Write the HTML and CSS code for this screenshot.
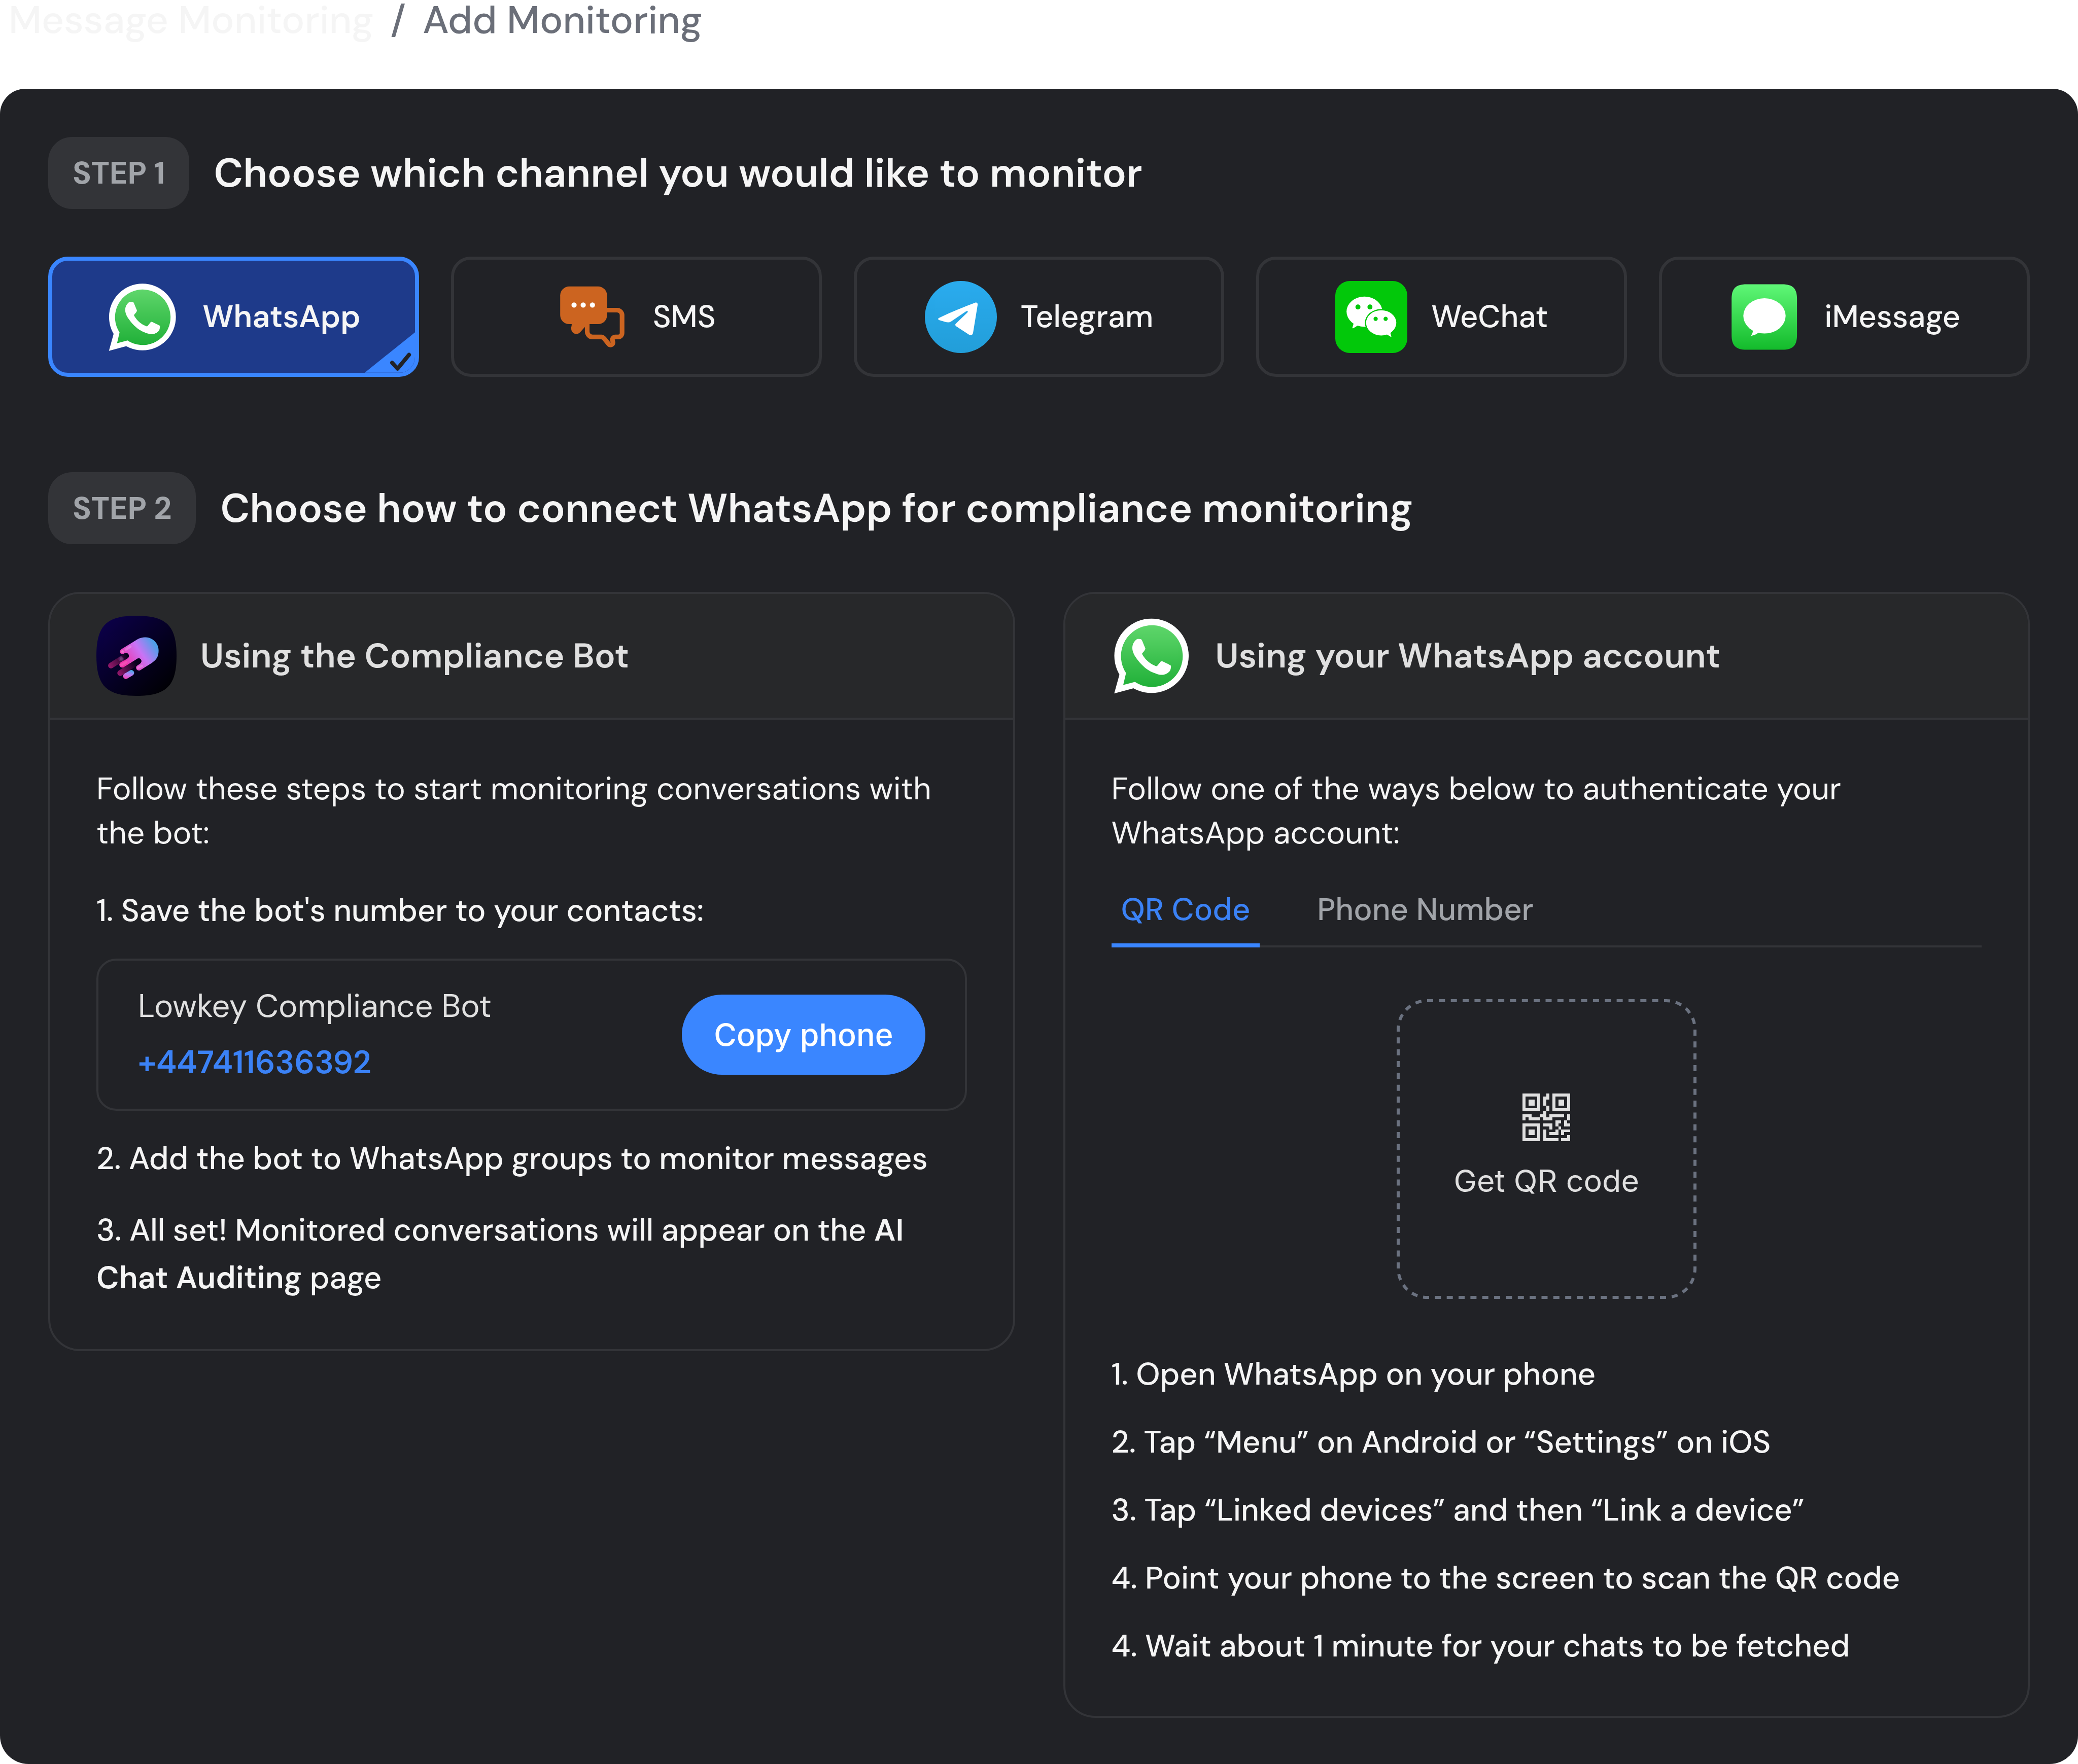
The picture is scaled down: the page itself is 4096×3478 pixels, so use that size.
FILE: index.html
```html
<!DOCTYPE html>
<html lang="en">
<head>
  <meta charset="UTF-8" />
  <title>Add Monitoring</title>
  <link rel="stylesheet" href="styles.css">
</head>
<body>

  <svg class="defs" aria-hidden="true">
    <defs>
      <linearGradient id="waGreen" x1="0" y1="0" x2="0" y2="1">
        <stop offset="0" stop-color="#5fd66b" />
        <stop offset="1" stop-color="#20b038" />
      </linearGradient>
      <symbol id="whatsapp" viewBox="0 0 144 144">
        <circle cx="71.8" cy="72" r="66.8" fill="#fff" />
        <path d="M14.4 105 L4.8 139.7 L40.5 130 L60 90Z" fill="#fff" />
        <path d="M26 103 A55.5 55.5 0 1 1 42 119 L21 124.5Z" fill="url(#waGreen)" />
        <path transform="translate(2.8 5) scale(5.75)" fill="#fff" d="M17.472 14.382c-.297-.149-1.758-.867-2.03-.967-.273-.099-.471-.148-.67.15-.197.297-.767.966-.94 1.164-.173.199-.347.223-.644.075-.297-.15-1.255-.463-2.39-1.475-.883-.788-1.48-1.761-1.653-2.059-.173-.297-.018-.458.13-.606.134-.133.298-.347.446-.52.149-.174.198-.298.298-.497.099-.198.05-.371-.025-.52-.075-.149-.669-1.612-.916-2.207-.242-.579-.487-.5-.669-.51-.173-.008-.371-.01-.57-.01-.198 0-.52.074-.792.372-.272.297-1.04 1.016-1.04 2.479 0 1.462 1.065 2.875 1.213 3.074.149.198 2.096 3.2 5.077 4.487.709.306 1.262.489 1.694.625.712.227 1.36.195 1.871.118.571-.085 1.758-.719 2.006-1.413.248-.694.248-1.289.173-1.413-.074-.124-.272-.198-.57-.347" />
      </symbol>
    </defs>
  </svg>

  <nav class="breadcrumb">
    <a href="#">Message Monitoring</a>
    <span class="slash">/</span>
    <span>Add Monitoring</span>
  </nav>

  <main class="panel">
    <div class="step-title">
      <span class="badge">STEP 1</span>
      <h2>Choose which channel you would like to monitor</h2>
    </div>

    <div class="channels">
      <button type="button" class="channel selected" aria-pressed="true">
        <svg class="icon"><use href="#whatsapp" /></svg>
        WhatsApp
        <svg class="corner" viewBox="0 0 101 81">
          <path d="M101 0 V81 H0Z" fill="#3a86ff" />
          <path d="M55 61 L66 73 L89 45" fill="none" stroke="#212226" stroke-width="8" stroke-linecap="round" stroke-linejoin="round" />
        </svg>
      </button>

      <button type="button" class="channel">
        <svg class="icon" viewBox="0 0 144 144">
          <path d="M98 58.3 H120 a10 10 0 0 1 10 10 V104 a8 8 0 0 1 -8 8 H117 C112 112 109 116 111.5 121 C113.5 126 107.5 130.5 103.5 126.5 L95 116 C93 113.5 91.5 112 88.5 112 H71 C65 112 60.3 107 60.3 101 V84" fill="none" stroke="#cc6420" stroke-width="9.3" />
          <rect x="6.3" y="11" width="93.7" height="75.3" rx="18" fill="#cc6420" />
          <path d="M29 84 C30 89 28.3 91 28.3 95 C28.3 105 40 110 46.7 102 L56 91.5 V84Z" fill="#cc6420" />
          <g fill="#fff">
            <circle cx="34" cy="48" r="5.2" />
            <circle cx="52.3" cy="48" r="5.2" />
            <circle cx="70.7" cy="48" r="5.2" />
          </g>
        </svg>
        SMS
      </button>

      <button type="button" class="channel">
        <svg class="icon" viewBox="0 0 144 144">
          <linearGradient id="tgBlue" x1="0" y1="0" x2="0" y2="1">
            <stop offset="0" stop-color="#2aabee" />
            <stop offset="1" stop-color="#229ed9" />
          </linearGradient>
          <circle cx="72" cy="72" r="72" fill="url(#tgBlue)" />
          <path d="M28 74 C50 63 80 51 100 43.5 C104 42.3 106 44 105.5 48 L96.5 103 C95.8 108 92.5 110 88.5 107.5 L62.5 90.5 C60.5 89 60.3 87 62 85.2 L85 63 C87 61 85.5 59 82.5 60.7 L53 80.5 C49 83.3 45 83 41 82 L29 78.3 C26 77.2 26 75 28 74Z" fill="#fff" />
        </svg>
        Telegram
      </button>

      <button type="button" class="channel">
        <svg class="icon" viewBox="0 0 144 144">
          <rect width="144" height="144" rx="29" fill="#02c80a" />
          <ellipse cx="58.3" cy="61.3" rx="35.8" ry="30.2" fill="#fff" />
          <path d="M34 82 C37 84 36.5 86 36 87.5 L34.3 93 C34 94.5 35 95 36.3 94.2 L45 89 L54 84Z" fill="#fff" />
          <ellipse cx="91.8" cy="83.7" rx="32.6" ry="27.6" fill="#02c80a" />
          <ellipse cx="91.8" cy="83.7" rx="30.2" ry="25.2" fill="#fff" />
          <path d="M113 101 C110 103.5 110.3 105 110.6 106 L112 110.5 C112.3 111.7 111.5 112 110.5 111.4 L103.3 107 L98 103Z" fill="#fff" />
          <g fill="#02c80a">
            <circle cx="45.3" cy="52" r="5" />
            <circle cx="69.3" cy="52" r="5" />
            <circle cx="80.7" cy="75.7" r="4.2" />
            <circle cx="100.7" cy="75.7" r="4.2" />
          </g>
        </svg>
        WeChat
      </button>

      <button type="button" class="channel">
        <svg class="icon" viewBox="0 0 144 144">
          <linearGradient id="imGreen" x1="0" y1="0" x2="0" y2="1">
            <stop offset="0" stop-color="#5ff777" />
            <stop offset="1" stop-color="#13bb2b" />
          </linearGradient>
          <path d="M36 6.5 H107.5 C129 6.5 137 15 137 36 V108 C137 129 129 137.5 107.5 137.5 H36 C14.5 137.5 6.3 129 6.3 108 V36 C6.3 15 14.5 6.5 36 6.5Z" fill="url(#imGreen)" />
          <ellipse cx="72" cy="69.8" rx="42.3" ry="35.2" fill="#fff" />
          <path d="M49 96 C49 103 47.5 106.5 44.3 109.7 C51 109.3 56 106.5 60 103.3 L66 96Z" fill="#fff" />
        </svg>
        iMessage
      </button>
    </div>

    <div class="step-title">
      <span class="badge">STEP 2</span>
      <h2>Choose how to connect WhatsApp for compliance monitoring</h2>
    </div>

    <div class="methods">
      <section class="card">
        <header class="card-header">
          <svg class="logo" viewBox="37 37 478 478">
            <defs>
              <linearGradient id="botBg" x1="0" y1="0" x2="1" y2="1">
                <stop offset="0.1" stop-color="#0b0047" />
                <stop offset="0.9" stop-color="#000004" />
              </linearGradient>
              <linearGradient id="comet" gradientUnits="userSpaceOnUse" x1="205" y1="325" x2="385" y2="205">
                <stop offset="0" stop-color="#f032a8" />
                <stop offset="0.55" stop-color="#c973f5" />
                <stop offset="1" stop-color="#4fa0ea" />
              </linearGradient>
              <linearGradient id="streak1" gradientUnits="userSpaceOnUse" x1="110" y1="342" x2="225" y2="272">
                <stop offset="0" stop-color="#97186d" />
                <stop offset="1" stop-color="#06001c" />
              </linearGradient>
              <linearGradient id="streak2" gradientUnits="userSpaceOnUse" x1="165" y1="388" x2="300" y2="302">
                <stop offset="0" stop-color="#97186d" />
                <stop offset="0.8" stop-color="#06001c" />
              </linearGradient>
              <linearGradient id="drop" gradientUnits="userSpaceOnUse" x1="222" y1="412" x2="236" y2="362">
                <stop offset="0" stop-color="#ee4bc0" />
                <stop offset="0.5" stop-color="#b97cf5" />
                <stop offset="1" stop-color="#4fa8ea" />
              </linearGradient>
            </defs>
            <path d="M276 37 C455 37 515 97 515 276 C515 455 455 515 276 515 C97 515 37 455 37 276 C37 97 97 37 276 37Z" fill="url(#botBg)" />
            <path d="M187 236 L283 177 C345 145 408 185 408 245 C408 280 395 300 368 318 L298 362 C282 370 268 352 276 338 C280 331 290 327 300 319 C312 308 302 286 284 292 L200 344 C185 352 168 335 177 320 C182 313 195 305 222 291 C236 283 232 262 216 260 C208 258 200 266 192 267 C176 266 172 246 187 236Z" fill="url(#comet)" />
            <g fill="none" stroke-linecap="round">
              <path d="M124 334 L214 277" stroke="url(#streak1)" stroke-width="34" />
              <path d="M191 329 L206 320" stroke="#f032a8" stroke-width="34" />
              <path d="M179 379 L288 309" stroke="url(#streak2)" stroke-width="34" />
              <path d="M213 397 L245 378" stroke="url(#drop)" stroke-width="34" />
              <path d="M213 238 L239 222" stroke="#fff" stroke-opacity="0.2" stroke-width="15" />
              <path d="M187 331 L214 315" stroke="#fff" stroke-opacity="0.14" stroke-width="17" />
              <path d="M285 348 L307 337" stroke="#fff" stroke-opacity="0.2" stroke-width="15" />
            </g>
            <circle cx="193" cy="251" r="8" fill="#fff" fill-opacity="0.25" />
            <circle cx="184" cy="294" r="16" fill="#8a3f9c" fill-opacity="0.4" />
            <circle cx="185" cy="294" r="9" fill="#fff" fill-opacity="0.15" />
          </svg>
          <h3>Using the Compliance Bot</h3>
        </header>
        <div class="card-body">
          <p class="intro">Follow these steps to start monitoring conversations with the bot:</p>
          <p class="step">1. Save the bot's number to your contacts:</p>
          <div class="contact">
            <div class="contact-info">
              <div>Lowkey Compliance Bot</div>
              <div class="phone">+447411636392</div>
            </div>
            <button type="button" class="copy">Copy phone</button>
          </div>
          <p class="step">2. Add the bot to WhatsApp groups to monitor messages</p>
          <p class="step">3. All set! Monitored conversations will appear on the <b>AI Chat Auditing</b> page</p>
        </div>
      </section>

      <section class="card">
        <header class="card-header">
          <svg class="logo"><use href="#whatsapp" /></svg>
          <h3>Using your WhatsApp account</h3>
        </header>
        <div class="card-body">
          <p class="intro">Follow one of the ways below to authenticate your WhatsApp account:</p>
          <div class="tabs" role="tablist">
            <button type="button" class="tab active" role="tab" aria-selected="true">QR Code</button>
            <button type="button" class="tab" role="tab" aria-selected="false">Phone Number</button>
          </div>
          <button type="button" class="qr">
            <svg class="qr-frame" viewBox="0 0 591 591">
              <rect x="3" y="3" width="585" height="585" rx="57" fill="none" stroke="#6b7280" stroke-width="6" stroke-dasharray="12 11.35" />
            </svg>
            <svg class="qr-icon" viewBox="0 0 16 16" shape-rendering="crispEdges">
              <g fill="none" stroke="#e0e0e0">
                <rect x="0.5" y="0.5" width="5" height="5" />
                <rect x="10.5" y="0.5" width="5" height="5" />
                <rect x="0.5" y="10.5" width="5" height="5" />
              </g>
              <path fill="#e0e0e0" d="M2 2h2v2H2z M12 2h2v2h-2z M2 12h2v2H2z
                M8 0h1v2H8z M7 1h1v3H7z M8 4h1v2H8z M7 6h1v1H7z
                M0 7h3v1H0z M6 7h2v1H6z M9 7h5v1H9z M15 7h1v2h-1z
                M0 8h1v1H0z M2 8h4v1H2z M7 8h3v1H7z
                M11 9h2v1h-2z M14 9h1v1h-1z
                M7 10h3v1H7z M11 10h1v1h-1z M14 10h2v1h-2z
                M9 11h1v1H9z M12 11h1v1h-1z
                M7 12h1v3H7z M11 12h1v1h-1z M13 12h3v1h-3z
                M9 13h3v1H9z M13 13h1v1h-1z
                M15 14h1v1h-1z M7 15h5v1H7z M13 15h3v1h-3z" />
            </svg>
            Get QR code
          </button>
          <div class="list">
            <p>1. Open WhatsApp on your phone</p>
            <p>2. Tap “Menu” on Android or “Settings” on iOS</p>
            <p>3. Tap “Linked devices” and then “Link a device”</p>
            <p>4. Point your phone to the screen to scan the QR code</p>
            <p>4. Wait about 1 minute for your chats to be fetched</p>
          </div>
        </div>
      </section>
    </div>
  </main>

</body>
</html>
```
FILE: styles.css
```css
* { box-sizing: border-box; }
body { margin: 0; background: #fff; color: #f5f5f5; font-family: "DM Sans", Inter, sans-serif; font-size: 61px; line-height: 87px; }
h2, h3, p { margin: 0; }
b { font-weight: 600; }
button { font: inherit; color: inherit; background: none; border: none; padding: 0; cursor: pointer; }
.defs { position: absolute; width: 0; height: 0; }

.breadcrumb { display: flex; gap: 33px; padding: 0 17px 95px; font-size: 76px; font-weight: 500; line-height: 80px; color: #6b6f79; }
.breadcrumb a { color: #f5f5f5; text-decoration: none; }

.panel { background: #212226; border-radius: 50px 50px 56px 56px; padding: 95px 95px 91px; }

.step-title { display: flex; align-items: center; gap: 48px; margin-bottom: 94px; }
.step-title h2 { font-size: 79px; font-weight: 600; line-height: 94px; }
.badge { background: #333438; color: #a1a4a9; border-radius: 47px; padding: 0 48px; font-weight: 700; line-height: 142px; }

.channels { display: grid; grid-template-columns: repeat(5, 1fr); gap: 63px; margin-bottom: 188px; }
.channel { position: relative; display: flex; align-items: center; justify-content: center; gap: 47px; height: 237px; border: 6px solid #333438; border-radius: 39px; font-weight: 500; overflow: hidden; }
.channel.selected { background: #1e3a8a; border: 8px solid #3a86ff; font-weight: 600; }
.icon { width: 142px; height: 142px; }
.corner { position: absolute; right: 0; bottom: 0; width: 99px; height: 80px; }

.methods { display: grid; grid-template-columns: 1fr 1fr; align-items: start; gap: 95px; }
.card { border: 4px solid #333438; border-radius: 63px; overflow: hidden; }
.card-header { display: flex; align-items: center; gap: 47px; padding: 43px 91px; background: #27282a; border-bottom: 4px solid #333438; color: #e0e0e0; }
.card-header h3 { font-size: 68px; font-weight: 600; line-height: 94px; }
.logo { width: 158px; height: 158px; }
.card-body { padding: 92px 91px 94px; }
.intro { margin-bottom: 63px; font-size: 62px; }
.step { font-weight: 500; line-height: 94px; }
.step + .step { margin-top: 47px; }

.contact { display: flex; align-items: center; justify-content: space-between; margin: 48px 0 47px; padding: 47px 78px; border: 4px solid #333438; border-radius: 39px; color: #e0e0e0; font-size: 63px; }
.phone { margin-top: 24px; color: #3b82f6; font-weight: 600; }
.copy { padding: 0 63px; border-radius: 79px; background: #3a86ff; color: #fff; font-family: Inter, sans-serif; font-size: 61px; font-weight: 500; line-height: 158px; }

.tabs { display: flex; gap: 94px; box-shadow: inset 0 -4px #333438; }
.tab { padding: 2px 19px 23px; border-bottom: 8px solid transparent; color: #a1a4a9; font-weight: 500; }
.tab.active { color: #3b82f6; border-color: #3a86ff; }

.qr { position: relative; display: flex; flex-direction: column; align-items: center; justify-content: center; gap: 32px; width: 591px; height: 591px; margin: 102px auto 105px; color: #e0e0e0; font-family: Inter, sans-serif; font-size: 61px; line-height: 93px; }
.qr-frame { position: absolute; inset: 0; }
.qr-icon { width: 94px; height: 94px; }
.list { display: grid; gap: 47px; font-weight: 500; }
```
